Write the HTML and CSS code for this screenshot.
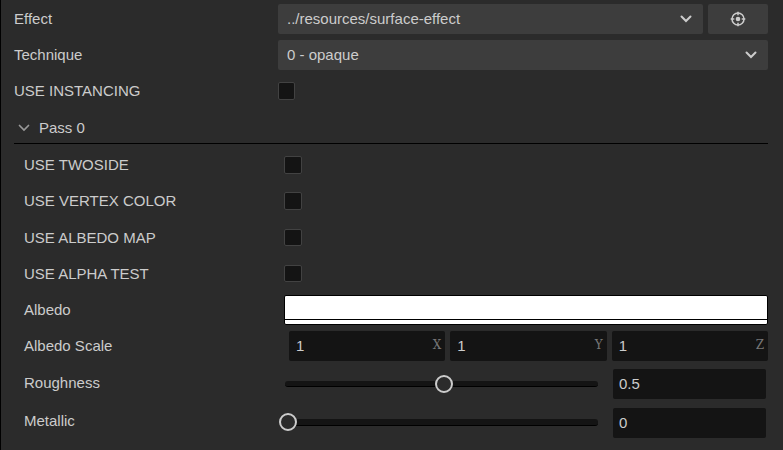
FILE: index.html
```html
<!DOCTYPE html>
<html lang="en">
<head>
<meta charset="utf-8">
<title>Material</title>
<link rel="stylesheet" href="styles.css">
</head>
<body>
<main class="panel">
  <div class="row">
    <span class="label">Effect</span>
    <div class="control">
      <div class="select"><span>../resources/surface-effect</span><svg class="chevron" viewBox="0 0 12 8"><path d="M1.500 1.500 6 6l4.500-4.500"/></svg></div>
      <div class="button"><svg class="target" viewBox="0 0 16 16"><circle cx="8" cy="8" r="6"/><circle class="dot" cx="8" cy="8" r="2.300"/><path d="M8 .7v3.600M8 11.700v3.600M.7 8h3.600M11.700 8h3.600"/></svg></div>
    </div>
  </div>
  <div class="row">
    <span class="label">Technique</span>
    <div class="control"><div class="select"><span>0 - opaque</span><svg class="chevron" viewBox="0 0 12 8"><path d="M1.500 1.500 6 6l4.500-4.500"/></svg></div></div>
  </div>
  <div class="row">
    <span class="label">USE INSTANCING</span>
    <div class="control"><span class="check"></span></div>
  </div>
  <div class="header"><svg class="chevron dim" viewBox="0 0 12 8"><path d="M1.500 1.500 6 6l4.500-4.500"/></svg><span>Pass 0</span></div>
  <section class="pass">
    <div class="row"><span class="label">USE TWOSIDE</span><div class="control"><span class="check"></span></div></div>
    <div class="row"><span class="label">USE VERTEX COLOR</span><div class="control"><span class="check"></span></div></div>
    <div class="row low"><span class="label">USE ALBEDO MAP</span><div class="control"><span class="check short"></span></div></div>
    <div class="row"><span class="label">USE ALPHA TEST</span><div class="control"><span class="check short"></span></div></div>
    <div class="row"><span class="label">Albedo</span><div class="control"><div class="color"><div class="alpha"></div></div></div></div>
    <div class="row">
      <span class="label">Albedo Scale</span>
      <div class="control vector">
        <div class="input"><span>1</span><span class="axis">X</span></div>
        <div class="input"><span>1</span><span class="axis">Y</span></div>
        <div class="input"><span>1</span><span class="axis">Z</span></div>
      </div>
    </div>
    <div class="row rough">
      <span class="label">Roughness</span>
      <div class="control range"><div class="slider"><span class="knob mid"></span></div><div class="input number">0.5</div></div>
    </div>
    <div class="row metal">
      <span class="label">Metallic</span>
      <div class="control range"><div class="slider thick"><span class="knob start"></span></div><div class="input number">0</div></div>
    </div>
  </section>
</main>
</body>
</html>
```
FILE: styles.css
```css
* { box-sizing: border-box; }
body { margin: 0; background: #2b2b2b; }
.panel {
  height: 450px;
  padding: 4px 15px 0 13px;
  border-left: 1px solid #000;
  overflow: hidden;
  color: #ccc;
  font: 15px/30px "Liberation Sans", Arial, sans-serif;
}
.row { display: grid; grid-template-columns: 264px 1fr; height: 30px; margin-bottom: 6px; }
.label { white-space: nowrap; }
.control { display: flex; align-items: center; gap: 5px; }
.select {
  display: flex;
  flex: 1;
  align-items: center;
  justify-content: space-between;
  height: 30px;
  padding: 0 11px 0 9px;
  border-radius: 2px;
  background: #3d3d3d;
}
.button { display: flex; align-items: center; justify-content: center; width: 60px; height: 30px; border-radius: 2px; background: #3d3d3d; }
.chevron { width: 12px; height: 8px; fill: none; stroke: #ccc; stroke-width: 2; stroke-linecap: round; }
.chevron.dim { stroke: #999; stroke-width: 1.700; }
.target { width: 16px; height: 16px; fill: none; stroke: #ccc; stroke-width: 1.500; }
.target .dot { fill: #ccc; stroke: none; }
.check { width: 17px; height: 18px; border: 1px solid #424242; border-radius: 2px; background: #141414; }
.header { display: flex; align-items: center; gap: 9px; height: 32px; padding-left: 4px; border-bottom: 1px solid #000; }
.pass { padding: 6px 0 0 10px; }
.pass .row { grid-template-columns: 260px 1fr; }
.pass .check { width: 18px; }
.pass .check.short { height: 17px; margin-bottom: 2px; }
.pass .low { margin-top: 7px; }
.color { flex: 1; height: 30px; padding-top: 23px; border: 1px solid #000; border-radius: 2px; background: #fff; }
.alpha { height: 1px; background: #000; }
.vector { padding-left: 5px; }
.input { display: flex; flex: 1; justify-content: space-between; height: 30px; padding: 0 4px 0 7px; border-radius: 2px; background: #141414; }
.axis { color: #777; font: 12px/28px "DejaVu Serif", serif; }
.range { gap: 15px; padding: 0 2px 0 1px; }
.number { flex: 0 0 153px; padding-left: 6px; }
.slider { position: relative; flex: 1; height: 6px; border-bottom: 1px solid #000; border-radius: 3px; background: #141414; }
.slider.thick { height: 7px; margin-bottom: 2px; }
.knob { position: absolute; top: -6px; width: 18px; height: 18px; border: 2px solid #ccc; border-radius: 50%; background: #2b2b2b; }
.mid { left: 150px; }
.start { left: -6px; }
.pass .rough { margin: 8px 0 9px; }
.rough .label { line-height: 28px; }
.metal .label { line-height: 26px; }
```
